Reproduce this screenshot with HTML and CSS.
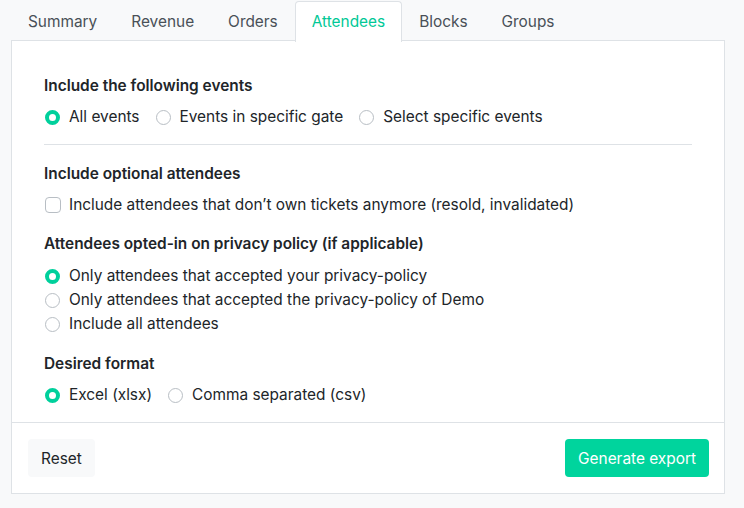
FILE: index.html
```html
<!DOCTYPE html>
<html>
<head>
<meta charset="utf-8">
<link rel="stylesheet" href="styles.css">
</head>
<body>
<div class="wrap">
  <ul class="tabs">
    <li class="tab">Summary</li>
    <li class="tab">Revenue</li>
    <li class="tab">Orders</li>
    <li class="tab active">Attendees</li>
    <li class="tab">Blocks</li>
    <li class="tab">Groups</li>
  </ul>
  <div class="panel">
    <div class="body">
      <div class="group">
        <div class="label">Include the following events</div>
        <div class="inline">
          <label class="opt"><span class="radio on"></span>All events</label>
          <label class="opt"><span class="radio"></span>Events in specific gate</label>
          <label class="opt"><span class="radio"></span>Select specific events</label>
        </div>
      </div>
      <hr class="divider">
      <div class="group">
        <div class="label">Include optional attendees</div>
        <label class="opt"><span class="check"></span>Include attendees that don’t own tickets anymore (resold, invalidated)</label>
      </div>
      <div class="group stack">
        <div class="label">Attendees opted-in on privacy policy (if applicable)</div>
        <label class="opt"><span class="radio on"></span>Only attendees that accepted your privacy-policy</label>
        <label class="opt"><span class="radio"></span>Only attendees that accepted the privacy-policy of Demo</label>
        <label class="opt"><span class="radio"></span>Include all attendees</label>
      </div>
      <div class="group last">
        <div class="label">Desired format</div>
        <div class="inline">
          <label class="opt"><span class="radio on"></span>Excel (xlsx)</label>
          <label class="opt"><span class="radio"></span>Comma separated (csv)</label>
        </div>
      </div>
    </div>
    <div class="footer">
      <button class="btn btn-light">Reset</button>
      <button class="btn btn-primary">Generate export</button>
    </div>
  </div>
</div>
</body>
</html>
```
FILE: styles.css
```css
* { box-sizing: border-box; }
html, body { margin: 0; padding: 0; background: #f8f9fa; }
body {
  font-family: Inter, "Liberation Sans", Arial, sans-serif;
  font-size: 15.4px;
  line-height: 24px;
  color: #212529;
}
.wrap { padding: 0 19px 0 11px; }
.tabs {
  display: flex;
  list-style: none;
  margin: 0;
  padding: 0;
  height: 41px;
}
.tab {
  padding: 8px 16px 8px 16px;
  color: #495057;
  border: 1px solid transparent;
  border-bottom: none;
  border-radius: 4px 4px 0 0;
  line-height: 24px;
  margin-top: 1px;
}
.tab.active {
  background: #fff;
  color: #00c896;
  border-color: #dee2e6;
  height: 41px;
  position: relative;
  z-index: 1;
}
.panel {
  background: #fff;
  border: 1px solid #dee2e6;
  margin-top: -1px;
}
.body { padding: 33px 32px 15px 32px; }
.group { margin-bottom: 15px; }
.group.stack { margin-bottom: 16px; }
.group.stack .label { margin-bottom: 8px; }
.group.last { margin-bottom: 0; }
.label { font-weight: 600; margin-bottom: 7px; }
.inline { display: flex; gap: 15px; }
.opt { display: flex; align-items: center; height: 24px; }
.radio {
  width: 15px; height: 15px;
  border: 1px solid #b8bec4;
  border-radius: 50%;
  margin: 0 9px 0 1px;
  flex: none;
  background: #fff;
}
.radio.on { border: 4px solid #00d09c; background: #fff; }
.check {
  width: 16px; height: 16px;
  border: 1px solid #b8bec4;
  border-radius: 4px;
  margin: 0 8px 0 1px;
  flex: none;
}
.divider { border: 0; border-top: 1px solid #dee2e6; margin: 15px 0 17px 0; }
.footer {
  border-top: 1px solid #dee2e6;
  padding: 16px 15px 16px 16px;
  display: flex;
  justify-content: space-between;
}
.btn {
  font-family: inherit;
  font-size: 15.4px;
  line-height: 24px;
  padding: 7px 12px;
  border-radius: 4px;
  border: 1px solid transparent;
  height: 38px;
}
.btn-light { background: #f8f9fa; color: #212529; }
.btn-primary { background: #00d49d; color: #fff; }
```
